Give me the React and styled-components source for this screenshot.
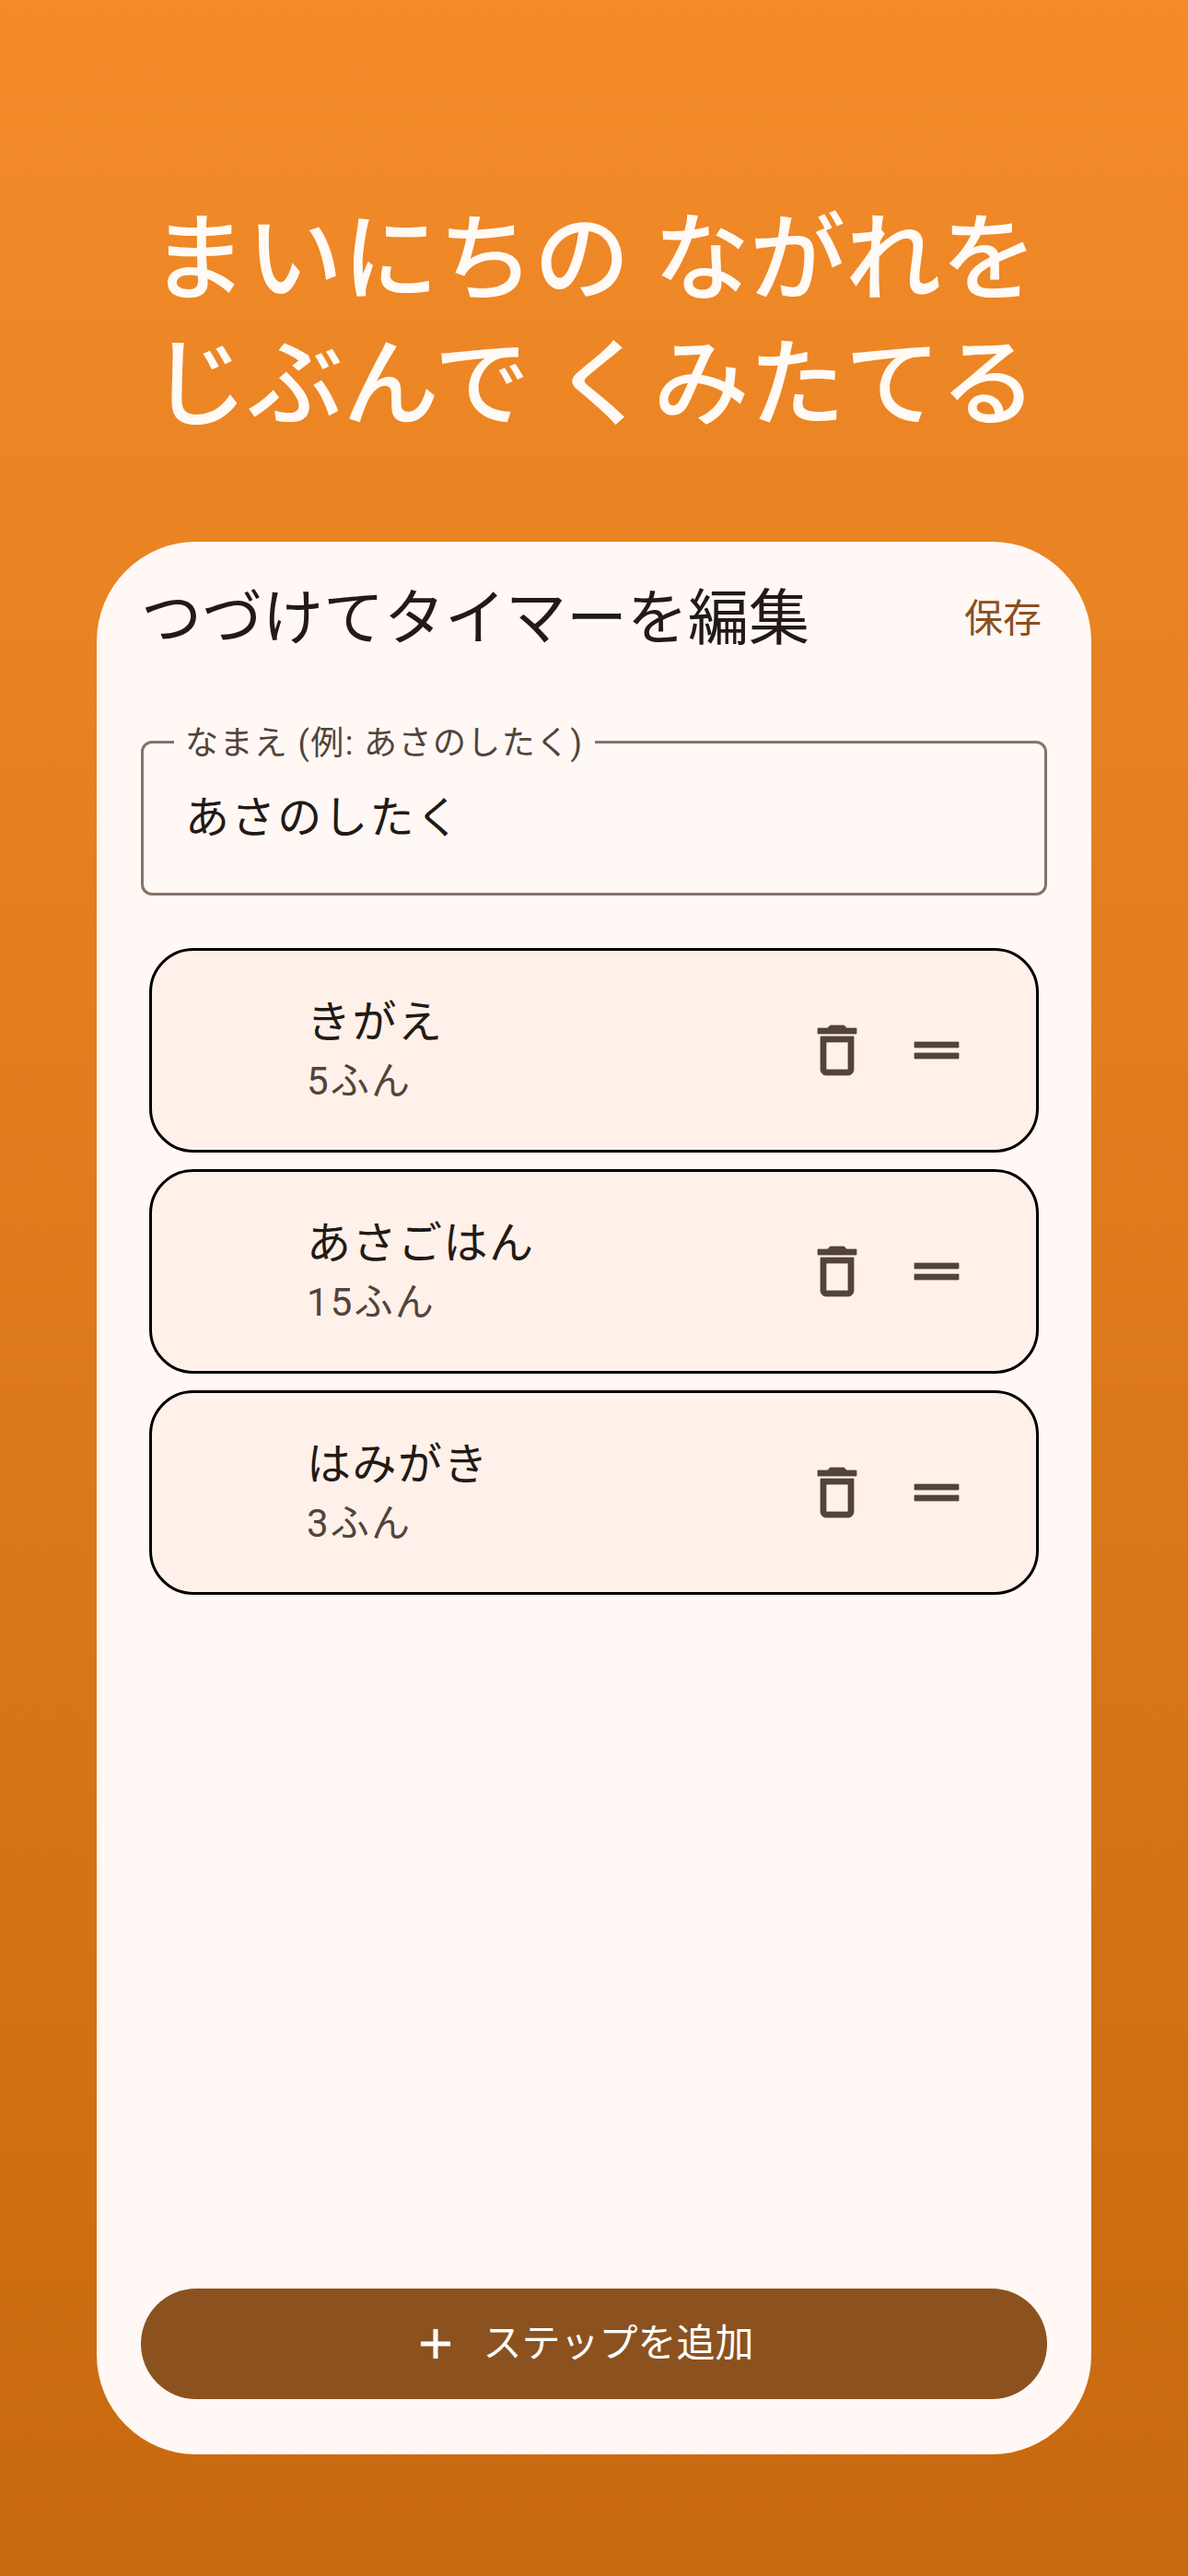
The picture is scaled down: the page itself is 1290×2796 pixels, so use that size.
import React from 'react';
import styled, { createGlobalStyle } from 'styled-components';

const GlobalStyle = createGlobalStyle`
  html, body {
    margin: 0;
    padding: 0;
  }
  body {
    font-family: Roboto, "Noto Sans CJK JP", sans-serif;
  }
`;

const Screen = styled.div`
  width: 1290px;
  height: 2796px;
  box-sizing: border-box;
  padding-top: 215px;
  display: flex;
  flex-direction: column;
  align-items: center;
  background: linear-gradient(180deg, #f38b29 0%, #c8690f 100%);
`;

const Headline = styled.h1`
  margin: 0 0 101px;
  color: #fffaf5;
  font-size: 104px;
  font-weight: 500;
  line-height: 136px;
  text-align: center;
  white-space: pre-line;
`;

const Sheet = styled.main`
  width: 1080px;
  height: 2076px;
  box-sizing: border-box;
  padding: 0 48px 60px;
  display: flex;
  flex-direction: column;
  background: #fff8f5;
  border-radius: 108px;
`;

const SheetHeader = styled.header`
  height: 168px;
  display: flex;
  align-items: center;
  justify-content: space-between;
  padding: 0 6px 0 0;
`;

const SheetTitle = styled.h2`
  margin: 0;
  color: #221a15;
  font-size: 66px;
  font-weight: 400;
  line-height: 84px;
`;

const SaveButton = styled.button`
  border: 0;
  padding: 0;
  background: none;
  color: #8b5020;
  font: inherit;
  font-size: 42px;
  line-height: 60px;
`;

const Field = styled.div`
  position: relative;
  margin-top: 48px;
  height: 168px;
  box-sizing: border-box;
  padding: 0 45px;
  display: flex;
  align-items: center;
  border: 3px solid #85736a;
  border-radius: 12px;
`;

const FieldLabel = styled.span`
  position: absolute;
  left: 33px;
  top: -24px;
  padding: 0 13px 0 12px;
  background: #fff8f5;
  color: #52443a;
  font-size: 36px;
  line-height: 48px;
  letter-spacing: 1.4px;
`;

const FieldValue = styled.div`
  color: #221a15;
  font-size: 48px;
  line-height: 72px;
  letter-spacing: 2.1px;
`;

const StepList = styled.ul`
  list-style: none;
  margin: 57px 0 0;
  padding: 0 9px;
  display: flex;
  flex-direction: column;
  gap: 18px;
`;

const StepRow = styled.li`
  height: 222px;
  box-sizing: border-box;
  padding: 0 72px 0 168px;
  display: flex;
  align-items: center;
  background: #fff1ea;
  border: 3px solid #000;
  border-radius: 48px;
`;

const StepText = styled.div`
  flex: 1;
  display: flex;
  flex-direction: column;
  margin-top: -3px;
`;

const StepName = styled.div`
  color: #221a15;
  font-size: 48px;
  line-height: 72px;
  letter-spacing: 1.5px;
`;

const StepTime = styled.div`
  margin-top: -2px;
  color: #52443a;
  font-size: 42px;
  line-height: 60px;
  letter-spacing: 2.2px;
`;

const IconSlot = styled.svg`
  flex: none;
  width: ${(p) => p.$size}px;
  height: ${(p) => p.$size}px;
  fill: ${(p) => p.$color};
  stroke: ${(p) => p.$color};
  stroke-width: 0.25;
`;

const TrashSlot = styled(IconSlot)`
  margin-right: 36px;
`;

const AddButton = styled.button`
  margin-top: auto;
  height: 120px;
  border: 0;
  padding: 0 25px 0 0;
  border-radius: 60px;
  display: flex;
  align-items: center;
  justify-content: center;
  gap: 24px;
  background: #8b521f;
  color: #fff;
  font: inherit;
  font-size: 42px;
  line-height: 60px;
`;

const steps = [
  { name: 'きがえ', time: '5ふん' },
  { name: 'あさごはん', time: '15ふん' },
  { name: 'はみがき', time: '3ふん' },
];

const App = () => {
  return (
    <Screen>
      <GlobalStyle />
      <Headline>{'まいにちの ながれを\nじぶんで くみたてる'}</Headline>
      <Sheet>
        <SheetHeader>
          <SheetTitle>つづけてタイマーを編集</SheetTitle>
          <SaveButton>保存</SaveButton>
        </SheetHeader>
        <Field>
          <FieldLabel>なまえ (例: あさのしたく)</FieldLabel>
          <FieldValue>あさのしたく</FieldValue>
        </Field>
        <StepList>
          {steps.map((step) => (
            <StepRow key={step.name}>
              <StepText>
                <StepName>{step.name}</StepName>
                <StepTime>{step.time}</StepTime>
              </StepText>
              <TrashSlot viewBox="0 0 24 24" $size={72} $color="#52443a">
                <path d="M6 19c0 1.1.9 2 2 2h8c1.1 0 2-.9 2-2V7H6v12zM8 9h8v10H8V9zm7.5-5l-1-1h-5l-1 1H5v2h14V4z" />
              </TrashSlot>
              <IconSlot viewBox="0 0 24 24" $size={72} $color="#52443a">
                <path d="M20 9H4v2h16V9zm0 4H4v2h16v-2z" />
              </IconSlot>
            </StepRow>
          ))}
        </StepList>
        <AddButton>
          <IconSlot viewBox="0 0 24 24" $size={54} $color="#fff">
            <path d="M19 13h-6v6h-2v-6H5v-2h6V5h2v6h6v2z" />
          </IconSlot>
          ステップを追加
        </AddButton>
      </Sheet>
    </Screen>
  );
};

export default App;
